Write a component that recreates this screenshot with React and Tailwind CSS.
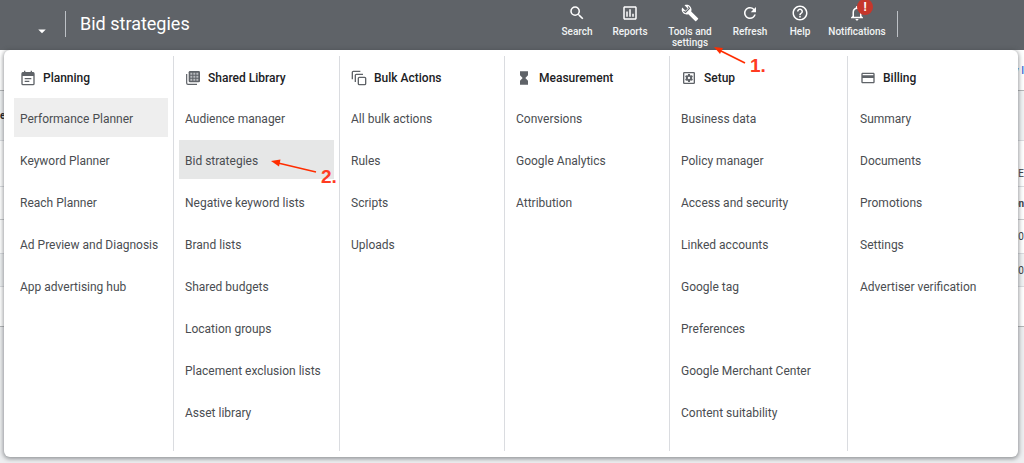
import React from "react";
import {
  MdSearch,
  MdOutlineInsertChart,
  MdRefresh,
  MdHelpOutline,
  MdNotificationsNone,
  MdArrowDropDown,
  MdHourglassFull,
  MdOutlineSettingsApplications,
  MdOutlineCreditCard,
} from "react-icons/md";

function WrenchIcon({ className }) {
  return (
    <svg viewBox="0 0 24 24" className={className}>
      <path
        d="M22.7 19l-9.100-9.100c.9-2.300.4-5-1.500-6.900-2-2-5-2.400-7.400-1.300L9 6 6 9 1.600 4.700C.4 7.100.9 10.100 2.900 12.100c1.900 1.900 4.600 2.400 6.900 1.500l9.100 9.100c.4.4 1 .4 1.400 0l2.300-2.300c.5-.4.5-1.100.1-1.400z"
        fill="currentColor"
      />
      <path d="M9.500 3.300L11.300 6L6 11.300L3.300 9.500" fill="none" stroke="#5f6368" strokeWidth="1.5" />
    </svg>
  );
}

function CalendarIcon() {
  return (
    <svg viewBox="0 0 24 24" className="size-4" fill="none" stroke="currentColor" strokeWidth="2">
      <rect x="3" y="4" width="18" height="18" rx="1.5" />
      <path d="M3 6.500h18" strokeWidth="5" />
      <path d="M7 1v4M17 1v4M7 13h10M7 17h7" />
    </svg>
  );
}

function LibraryIcon() {
  return (
    <svg viewBox="0 0 24 24" className="size-4" fill="none" stroke="currentColor">
      <path d="M2.500 6v13.500Q2.500 21.500 4.500 21.500H18" strokeWidth="1.8" />
      <rect x="5.500" y="1.500" width="17" height="17" rx="2" fill="currentColor" stroke="none" />
      <path
        d="M8 4h3v3H8zM12.500 4h3v3h-3zM17 4h3v3h-3zM8 8.500h3v3H8zM12.500 8.500h3v3h-3zM17 8.500h3v3h-3zM8 13h3v3H8zM12.500 13h3v3h-3zM17 13h3v3h-3z"
        fill="#b9bbbe"
        stroke="none"
      />
    </svg>
  );
}

function BulkIcon() {
  return (
    <svg viewBox="0 0 24 24" className="size-4" fill="none" stroke="currentColor" strokeWidth="2">
      <path d="M2 14V3.500Q2 2 3.500 2H14" />
      <path d="M6.500 18V8Q6.500 6.500 8 6.500H18" />
      <rect x="11" y="11" width="11" height="11" rx="1.5" />
    </svg>
  );
}

const tools = [
  { label: "Search", Icon: MdSearch, width: "w-12" },
  { label: "Reports", Icon: MdOutlineInsertChart, width: "w-[58px]" },
  { label: "Tools and settings", Icon: WrenchIcon, width: "w-[62px]" },
  { label: "Refresh", Icon: MdRefresh, width: "w-[58px]" },
  { label: "Help", Icon: MdHelpOutline, width: "w-[42px]" },
  { label: "Notifications", Icon: MdNotificationsNone, width: "w-[72px]", alert: true },
];

const columns = [
  {
    title: "Planning",
    icon: <CalendarIcon />,
    pad: "pl-[10px]",
    items: ["Performance Planner", "Keyword Planner", "Reach Planner", "Ad Preview and Diagnosis", "App advertising hub"],
  },
  {
    title: "Shared Library",
    icon: <LibraryIcon />,
    pad: "pl-[5px]",
    items: [
      "Audience manager",
      "Bid strategies",
      "Negative keyword lists",
      "Brand lists",
      "Shared budgets",
      "Location groups",
      "Placement exclusion lists",
      "Asset library",
    ],
  },
  {
    title: "Bulk Actions",
    icon: <BulkIcon />,
    pad: "pl-[5px]",
    items: ["All bulk actions", "Rules", "Scripts", "Uploads"],
  },
  {
    title: "Measurement",
    icon: <MdHourglassFull className="size-4" />,
    pad: "pl-[5px]",
    items: ["Conversions", "Google Analytics", "Attribution"],
  },
  {
    title: "Setup",
    icon: <MdOutlineSettingsApplications className="size-4" />,
    pad: "pl-[5px]",
    items: [
      "Business data",
      "Policy manager",
      "Access and security",
      "Linked accounts",
      "Google tag",
      "Preferences",
      "Google Merchant Center",
      "Content suitability",
    ],
  },
  {
    title: "Billing",
    icon: <MdOutlineCreditCard className="size-4" />,
    pad: "pl-[6px]",
    items: ["Summary", "Documents", "Promotions", "Settings", "Advertiser verification"],
  },
];

const highlights = {
  "Performance Planner": "bg-[#eeeeee]",
  "Bid strategies": "bg-[#e6e7e7]",
};

function Header() {
  return (
    <header className="flex h-[50px] items-start bg-[#5f6368] text-white">
      <button aria-label="Switch account" className="mt-[22px] ml-[33px]">
        <MdArrowDropDown className="size-[18px]" />
      </button>
      <div className="mt-[11px] ml-[14px] h-[26px] w-px bg-[#bdc1c6]" />
      <h1 className="mt-3 ml-[14px] text-[18px] leading-6">Bid strategies</h1>
      <nav className="ml-auto flex items-start">
        {tools.map(({ label, Icon, width, alert }) => (
          <button key={label} className={`flex flex-col items-center pt-1 ${width}`}>
            <span className="relative">
              <Icon className="size-[18px]" />
              {alert && (
                <span className="absolute -top-[5px] left-[9px] flex size-4 items-center justify-center rounded-full bg-[#c5372c] text-[12px] leading-4 font-bold">
                  !
                </span>
              )}
            </span>
            <span className="mt-1 text-[10px] leading-[11px] font-medium text-[#f1f3f4]">{label}</span>
          </button>
        ))}
      </nav>
      <div className="mt-[11px] mr-[126px] ml-1 h-[26px] w-px bg-[#bdc1c6]" />
    </header>
  );
}

function PageBehind() {
  return (
    <main className="text-[10px] text-[#3c4043]">
      <div className="flex h-[41px] items-center justify-end border-b border-[#b4b6b8] bg-white font-medium text-[#3367d6]">
        y I
      </div>
      <div className="flex h-[50px] items-center border-b border-[#dadce0] bg-[#f1f3f4] font-bold text-[#202124]">e</div>
      <div className="flex h-[46px] items-end justify-end border-b border-[#dadce0] bg-white pb-[5px]">E</div>
      <div className="flex h-[33px] items-center justify-end border-b border-[#c8cacc] bg-white font-bold">on</div>
      <div className="flex h-[34px] items-center justify-end border-b border-[#dadce0] bg-white">00</div>
      <div className="flex h-[33px] items-center justify-end border-b border-[#dadce0] bg-[#f1f3f4]">00</div>
      <div className="h-10 border-b border-[#b4b6b8] bg-white" />
    </main>
  );
}

function ToolsMenu() {
  return (
    <section
      aria-label="Tools and settings"
      className="absolute top-[50px] right-[6px] left-1 grid grid-cols-[170fr_166fr_165fr_165fr_178fr_170fr] rounded-md bg-white py-[6px] shadow-[0_1px_4px_1px_rgba(60,64,67,0.5)]"
    >
      {columns.map(({ title, icon, pad, items }) => (
        <div key={title} className={`min-h-[395px] border-r border-[#dadce0] pr-[5px] last:border-r-0 ${pad}`}>
          <h2 className="flex h-[42px] items-center gap-[7px] pt-px pl-[6px] text-[12px] font-medium text-[#202124]">
            <span className="text-[#5f6368]">{icon}</span>
            {title}
          </h2>
          <ul className="flex flex-col gap-[3px]">
            {items.map((item) => (
              <li key={item}>
                <a
                  href="#"
                  className={`flex h-[39px] items-center pt-[2px] pl-[6px] text-[12px] whitespace-nowrap text-[#4a4d51] ${highlights[item] || ""}`}
                >
                  {item}
                </a>
              </li>
            ))}
          </ul>
        </div>
      ))}
    </section>
  );
}

function Annotations() {
  return (
    <div className="pointer-events-none absolute top-0 left-0 font-['Liberation_Sans',sans-serif] text-[19px] leading-5 font-bold text-[#ff3b22]">
      <svg className="absolute top-[44px] left-[710px] h-6 w-10" viewBox="0 0 40 24">
        <path d="M35 19L11 7" stroke="#ff2d00" strokeWidth="1.6" />
        <path d="M4 3L13 4L10 10Z" fill="#ff2d00" />
      </svg>
      <span className="absolute top-[56px] left-[750px]">1.</span>
      <svg className="absolute top-[155px] left-[268px] h-5 w-[52px]" viewBox="0 0 52 20">
        <path d="M48 17L10 8" stroke="#ff2d00" strokeWidth="1.6" />
        <path d="M3 6L12.500 4.500L11 11.500Z" fill="#ff2d00" />
      </svg>
      <span className="absolute top-[167px] left-[321px]">2.</span>
    </div>
  );
}

export default function App() {
  return (
    <div className="relative min-h-screen overflow-hidden bg-[#eeeff1] font-[Roboto,sans-serif]">
      <Header />
      <PageBehind />
      <ToolsMenu />
      <Annotations />
    </div>
  );
}
